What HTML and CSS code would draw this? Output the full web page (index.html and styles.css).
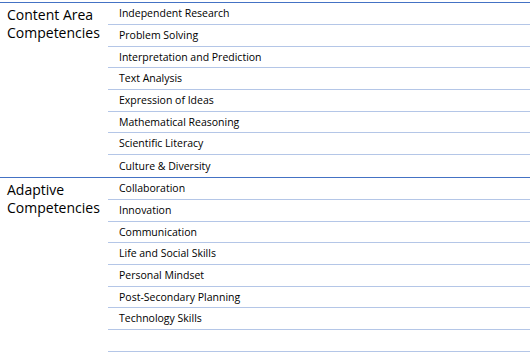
FILE: index.html
```html
<!DOCTYPE html>
<html>
<head>
<meta charset="utf-8">
<link rel="stylesheet" href="styles.css">
</head>
<body>
<div class="sheet">
  <section class="group">
    <div class="group-title">Content Area<br>Competencies</div>
    <ul class="items">
      <li class="r22">Independent Research</li>
      <li class="r22">Problem Solving</li>
      <li class="r21">Interpretation and Prediction</li>
      <li class="r22">Text Analysis</li>
      <li class="r22">Expression of Ideas</li>
      <li class="r21">Mathematical Reasoning</li>
      <li class="r22">Scientific Literacy</li>
      <li class="r22">Culture &amp; Diversity</li>
    </ul>
  </section>
  <section class="group">
    <div class="group-title">Adaptive<br>Competencies</div>
    <ul class="items">
      <li class="r22">Collaboration</li>
      <li class="r22">Innovation</li>
      <li class="r21">Communication</li>
      <li class="r22">Life and Social Skills</li>
      <li class="r22">Personal Mindset</li>
      <li class="r21">Post-Secondary Planning</li>
      <li class="r22">Technology Skills</li>
      <li class="r22"></li>
    </ul>
  </section>
</div>
</body>
</html>
```
FILE: styles.css
```css
html, body {
  margin: 0;
  padding: 0;
  background: #fff;
}
body {
  padding-top: 2px;
  font-family: "Open Sans", "Liberation Sans", sans-serif;
  color: #000;
}
.sheet {
  width: 530px;
}
.group {
  display: flex;
  border-top: 1px solid #4472c4;
}
.group-title {
  width: 108px;
  flex: none;
  box-sizing: border-box;
  padding: 3px 0 0 7px;
  font-size: 14px;
  font-weight: 500;
  line-height: 18px;
}
.items {
  list-style: none;
  margin: 0;
  padding: 0;
  flex: 1;
}
.items li {
  box-sizing: border-box;
  padding: 0 0 1px 11px;
  font-size: 10.5px;
  display: flex;
  align-items: center;
  border-bottom: 1px solid #b4c6e7;
}
.items li:last-child {
  border-bottom: none;
}
.group:last-child .items li:last-child {
  border-bottom: 1px solid #b4c6e7;
}
.r22 { height: 22px; }
.r21 { height: 21px; }
```
